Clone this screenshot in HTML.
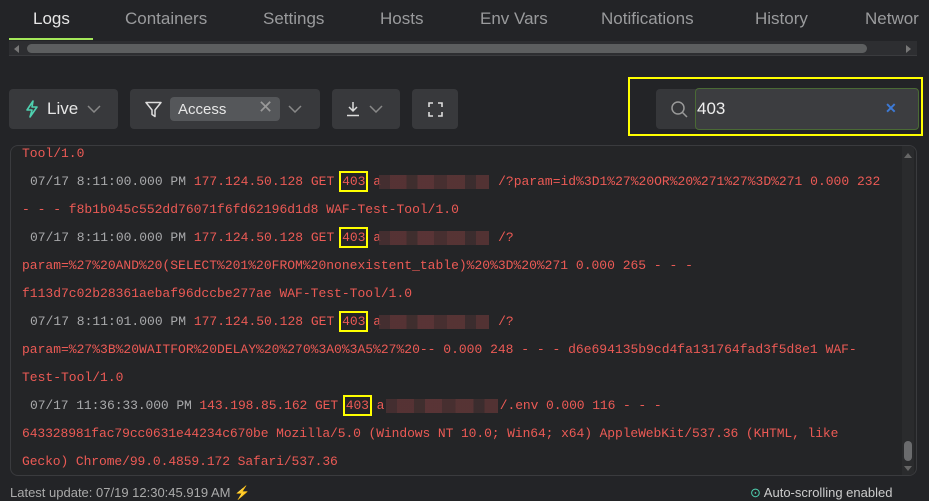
<!DOCTYPE html>
<html><head><meta charset="utf-8"><style>
*{margin:0;padding:0;box-sizing:border-box}
body{width:929px;height:492px;background:#232427;overflow:hidden;position:relative;font-family:"Liberation Sans",sans-serif}
.tab{position:absolute;top:9px;font-size:17px;color:#9a9b9d;white-space:nowrap}
.btn{position:absolute;top:89px;height:40px;background:#38393c;border-radius:4px}
.panel{position:absolute;left:10px;top:145px;width:907px;height:331px;border:1px solid #3a3b3e;border-radius:8px;background:#242527;overflow:hidden}
.l{position:absolute;font-family:"Liberation Mono",monospace;font-size:13px;color:#ec5a55;white-space:pre;line-height:16px}
.g{color:#a8a9ab}
.hl{outline:2px solid #ffff00;outline-offset:1px}
.bl{position:absolute;height:14px;background:linear-gradient(90deg,#4a3031 0 10%,#5e3536 10% 25%,#44302f 25% 35%,#623738 35% 50%,#4d3132 50% 62%,#5f3637 62% 78%,#3f2e2f 78% 88%,#5a3435 88%);opacity:.85}
</style></head><body>
<div class="tab" style="left:33px;color:#e6e6e6">Logs</div>
<div class="tab" style="left:125px">Containers</div>
<div class="tab" style="left:263px">Settings</div>
<div class="tab" style="left:380px">Hosts</div>
<div class="tab" style="left:480px">Env Vars</div>
<div class="tab" style="left:601px">Notifications</div>
<div class="tab" style="left:755px">History</div>
<div class="tab" style="left:865px">Networ</div>
<div style="position:absolute;left:9px;top:38px;width:84px;height:2px;background:#a4e85a"></div>
<div style="position:absolute;left:9px;top:41px;width:908px;height:15px;background:#2d2e31;border-bottom:1px solid #3a3b3e"></div>
<div style="position:absolute;left:27px;top:44px;width:840px;height:9px;background:#5c5e5f;border-radius:5px"></div>
<div style="position:absolute;left:14px;top:45px;border-right:5px solid #777;border-top:4px solid transparent;border-bottom:4px solid transparent"></div>
<div style="position:absolute;left:906px;top:45px;border-left:5px solid #777;border-top:4px solid transparent;border-bottom:4px solid transparent"></div>

<div class="btn" style="left:9px;width:109px">
 <svg style="position:absolute;left:16px;top:11px" width="14" height="18" viewBox="0 0 14 18"><path d="M8 1 L2 10 H7 L5 17 L12 7 H7 Z" fill="none" stroke="#4fd1b0" stroke-width="1.6" stroke-linejoin="round"/></svg>
 <span style="position:absolute;left:38px;top:10px;font-size:17px;color:#e6e6e6">Live</span>
 <svg style="position:absolute;left:78px;top:16px" width="14" height="8"><path d="M1 1 L7 7 L13 1" fill="none" stroke="#888" stroke-width="1.5"/></svg>
</div>
<div class="btn" style="left:130px;width:190px">
 <svg style="position:absolute;left:15px;top:12px" width="17" height="17" viewBox="0 0 17 17"><path d="M1 1.5 H16 L10 9 V15.5 L7 13.5 V9 Z" fill="none" stroke="#ddd" stroke-width="1.5" stroke-linejoin="round"/></svg>
 <div style="position:absolute;left:40px;top:8px;width:110px;height:24px;background:#55575a;border-radius:4px"></div>
 <span style="position:absolute;left:48px;top:12px;font-size:15px;color:#e6e6e6">Access</span>
 <span style="position:absolute;left:128px;top:8px;font-size:18px;color:#999">✕</span>
 <svg style="position:absolute;left:158px;top:16px" width="14" height="8"><path d="M1 1 L7 7 L13 1" fill="none" stroke="#888" stroke-width="1.5"/></svg>
</div>
<div class="btn" style="left:332px;width:68px">
 <svg style="position:absolute;left:14px;top:12px" width="14" height="16"><path d="M7 1 V10 M3 6 L7 10 L11 6 M1 14.5 H13" fill="none" stroke="#ddd" stroke-width="1.5"/></svg>
 <svg style="position:absolute;left:37px;top:16px" width="14" height="8"><path d="M1 1 L7 7 L13 1" fill="none" stroke="#888" stroke-width="1.5"/></svg>
</div>
<div class="btn" style="left:412px;width:46px">
 <svg style="position:absolute;left:16px;top:13px" width="15" height="15"><path d="M1 5 V1 H5 M10 1 H14 V5 M14 10 V14 H10 M5 14 H1 V10" fill="none" stroke="#ddd" stroke-width="1.6"/></svg>
</div>

<div style="position:absolute;left:628px;top:77px;width:295px;height:59px;border:2px solid #ffff00"></div>
<div style="position:absolute;left:656px;top:89px;width:262px;height:40px;background:#36373a;border-radius:4px"></div>
<svg style="position:absolute;left:670px;top:100px" width="20" height="20"><circle cx="8" cy="8" r="6" fill="none" stroke="#999" stroke-width="1.5"/><path d="M12.5 12.5 L17 17" stroke="#999" stroke-width="1.5"/></svg>
<div style="position:absolute;left:695px;top:88px;width:224px;height:42px;background:#3c3d40;border:1.5px solid #4a6a35;border-radius:4px"></div>
<span style="position:absolute;left:697px;top:99px;font-size:17px;color:#eee">403</span>
<span style="position:absolute;left:885px;top:100px;font-size:14px;color:#3d7ad6;font-weight:bold">✕</span>

<div class="panel">
 <div style="position:absolute;right:2px;top:0;width:12px;height:331px;background:#2a2b2d"></div>
 <div style="position:absolute;right:4px;top:7px;border-bottom:5px solid #666;border-left:4px solid transparent;border-right:4px solid transparent"></div>
 <div style="position:absolute;right:4px;top:295px;width:8px;height:20px;background:#6a6b6d;border-radius:4px"></div>
 <div style="position:absolute;right:4px;top:320px;border-top:5px solid #666;border-left:4px solid transparent;border-right:4px solid transparent"></div>
</div>
<div class="l" style="left:22px;top:146px">Tool/1.0</div>
<div class="l" style="left:30px;top:174px"><span class="g">07/17 8:11:00.000 PM</span> 177.124.50.128 GET <span class="hl">403</span> a               /?param=id%3D1%27%20OR%20%271%27%3D%271 0.000 232</div>
<div class="bl" style="left:379px;top:175px;width:110px"></div>
<div class="l" style="left:22px;top:202px">- - - f8b1b045c552dd76071f6fd62196d1d8 WAF-Test-Tool/1.0</div>
<div class="l" style="left:30px;top:230px"><span class="g">07/17 8:11:00.000 PM</span> 177.124.50.128 GET <span class="hl">403</span> a               /?</div>
<div class="bl" style="left:379px;top:231px;width:110px"></div>
<div class="l" style="left:22px;top:258px">param=%27%20AND%20(SELECT%201%20FROM%20nonexistent_table)%20%3D%20%271 0.000 265 - - -</div>
<div class="l" style="left:22px;top:286px">f113d7c02b28361aebaf96dccbe277ae WAF-Test-Tool/1.0</div>
<div class="l" style="left:30px;top:314px"><span class="g">07/17 8:11:01.000 PM</span> 177.124.50.128 GET <span class="hl">403</span> a               /?</div>
<div class="bl" style="left:379px;top:315px;width:110px"></div>
<div class="l" style="left:22px;top:342px">param=%27%3B%20WAITFOR%20DELAY%20%270%3A0%3A5%27%20-- 0.000 248 - - - d6e694135b9cd4fa131764fad3f5d8e1 WAF-</div>
<div class="l" style="left:22px;top:370px">Test-Tool/1.0</div>
<div class="l" style="left:30px;top:398px;letter-spacing:-0.1px"><span class="g">07/17 11:36:33.000 PM</span> 143.198.85.162 GET <span class="hl">403</span> a               /.env 0.000 116 - - -</div>
<div class="bl" style="left:386px;top:399px;width:112px"></div>
<div class="l" style="left:22px;top:426px;letter-spacing:-0.1px">643328981fac79cc0631e44234c670be Mozilla/5.0 (Windows NT 10.0; Win64; x64) AppleWebKit/537.36 (KHTML, like</div>
<div class="l" style="left:22px;top:454px;letter-spacing:-0.1px">Gecko) Chrome/99.0.4859.172 Safari/537.36</div>

<div style="position:absolute;left:10px;top:485px;font-size:13px;color:#aaa;white-space:nowrap">Latest update: 07/19 12:30:45.919 AM <span style="color:#a4e85a">⚡</span></div>
<div style="position:absolute;left:750px;top:485px;font-size:13px;color:#ccc;white-space:nowrap"><span style="color:#4fd1b0">⊙</span> Auto-scrolling enabled</div>
</body></html>
